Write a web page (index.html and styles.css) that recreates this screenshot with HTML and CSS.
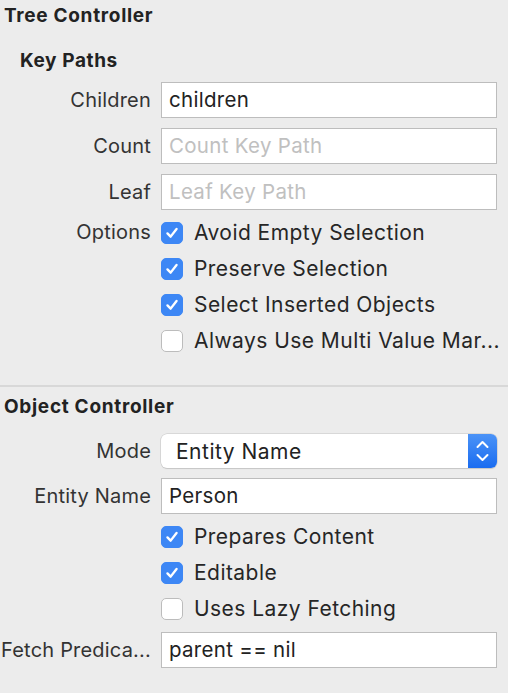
FILE: index.html
```html
<!DOCTYPE html>
<html>
<head>
<meta charset="utf-8">
<link rel="stylesheet" href="styles.css">
</head>
<body>
<div class="panel">
  <section class="section tree">
    <h1 class="title">Tree Controller</h1>
    <h2 class="subtitle">Key Paths</h2>
    <div class="form">
      <label class="label">Children</label>
      <div class="field">children</div>
      <label class="label">Count</label>
      <div class="field placeholder">Count Key Path</div>
      <label class="label">Leaf</label>
      <div class="field placeholder">Leaf Key Path</div>
      <label class="label opt-label">Options</label>
      <div class="checks">
        <div class="check"><span class="box on"><svg viewBox="0 0 22 22"><path d="M6 11.5 L9.5 15 L16 6.5" /></svg></span>Avoid Empty Selection</div>
        <div class="check"><span class="box on"><svg viewBox="0 0 22 22"><path d="M6 11.5 L9.5 15 L16 6.5" /></svg></span>Preserve Selection</div>
        <div class="check"><span class="box on"><svg viewBox="0 0 22 22"><path d="M6 11.5 L9.5 15 L16 6.5" /></svg></span>Select Inserted Objects</div>
        <div class="check"><span class="box"></span>Always Use Multi Value Mar...</div>
      </div>
    </div>
  </section>
  <hr class="sep">
  <section class="section obj">
    <h1 class="title">Object Controller</h1>
    <div class="form form2">
      <label class="label">Mode</label>
      <div class="popup"><span class="popup-text">Entity Name</span><span class="stepper"><svg viewBox="0 0 29 34"><path d="M9.5 13 L14.5 8 L19.5 13 M9.5 21 L14.5 26 L19.5 21" /></svg></span></div>
      <label class="label">Entity Name</label>
      <div class="field">Person</div>
      <span></span>
      <div class="checks checks2">
        <div class="check"><span class="box on"><svg viewBox="0 0 22 22"><path d="M6 11.5 L9.5 15 L16 6.5" /></svg></span>Prepares Content</div>
        <div class="check"><span class="box on"><svg viewBox="0 0 22 22"><path d="M6 11.5 L9.5 15 L16 6.5" /></svg></span>Editable</div>
        <div class="check"><span class="box"></span>Uses Lazy Fetching</div>
      </div>
      <label class="label">Fetch Predica...</label>
      <div class="field">parent == nil</div>
    </div>
  </section>
</div>
</body>
</html>
```

FILE: styles.css
```css
html, body {
  margin: 0;
  padding: 0;
  background: #ececec;
}
body {
  font-family: "Inter", "Liberation Sans", sans-serif;
  color: #262626;
  width: 508px;
  height: 693px;
  overflow: hidden;
}
.panel {
  display: flex;
  flex-direction: column;
}
.section.tree {
  padding-top: 3px;
}
.title {
  margin: 0;
  padding-left: 4px;
  font-size: 19px;
  letter-spacing: 0.7px;
  font-weight: 700;
  line-height: 26px;
  color: #222;
}
.subtitle {
  margin: 20px 0 0 0;
  padding-left: 20px;
  font-size: 19px;
  letter-spacing: 0.6px;
  font-weight: 700;
  line-height: 24px;
  color: #222;
}
.form {
  display: grid;
  grid-template-columns: 151px 336px;
  column-gap: 10px;
  row-gap: 10px;
  margin-top: 9px;
  align-items: center;
}
.label {
  text-align: right;
  font-size: 20px;
  letter-spacing: 0.2px;
  color: #333;
  white-space: nowrap;
  overflow: hidden;
}
.opt-label {
  align-self: start;
  line-height: 22px;
  margin-top: 1px;
}
.field {
  box-sizing: border-box;
  height: 36px;
  background: #fff;
  border: 1px solid #bdbdbd;
  font-size: 20.5px;
  letter-spacing: 0.3px;
  line-height: 34px;
  padding-left: 7px;
  color: #222;
}
.field.placeholder {
  color: #c0c0c0;
}
.checks {
  display: flex;
  flex-direction: column;
  gap: 14px;
  margin-top: 2px;
}
.check {
  display: flex;
  align-items: center;
  gap: 11px;
  font-size: 21px;
  letter-spacing: 0.45px;
  line-height: 22px;
  height: 22px;
  color: #262626;
  white-space: nowrap;
}
.box {
  box-sizing: border-box;
  width: 22px;
  height: 22px;
  border-radius: 5px;
  background: #fff;
  border: 1px solid #bcbcbc;
  flex: none;
  display: flex;
}
.box.on {
  background: #3d87f5;
  border-color: #3d87f5;
}
.box svg {
  width: 20px;
  height: 20px;
}
.box svg path {
  fill: none;
  stroke: #fff;
  stroke-width: 2.6;
  stroke-linecap: round;
  stroke-linejoin: round;
}
.sep {
  margin: 33px 0 0 0;
  border: none;
  border-top: 2px solid #d8d8d8;
  height: 0;
}
.section.obj {
  padding-top: 7px;
}
.form2 {
  margin-top: 14px;
}
.popup {
  box-sizing: border-box;
  height: 34px;
  background: #fff;
  border-radius: 6px;
  box-shadow: 0 0 0 0.5px #c4c4c4, 0 1px 1px rgba(0,0,0,0.15);
  display: flex;
  align-items: center;
  overflow: hidden;
}
.popup-text {
  flex: 1;
  font-size: 21px;
  letter-spacing: 0.5px;
  padding-left: 15px;
  color: #222;
}
.stepper {
  width: 29px;
  height: 34px;
  background: linear-gradient(#4b93f7, #1a6cf0);
  display: flex;
}
.stepper svg {
  width: 29px;
  height: 34px;
}
.stepper svg path {
  fill: none;
  stroke: #fff;
  stroke-width: 2;
  stroke-linecap: round;
  stroke-linejoin: round;
}
.checks2 {
  margin-top: 2px;
  margin-bottom: 2px;
}
```
